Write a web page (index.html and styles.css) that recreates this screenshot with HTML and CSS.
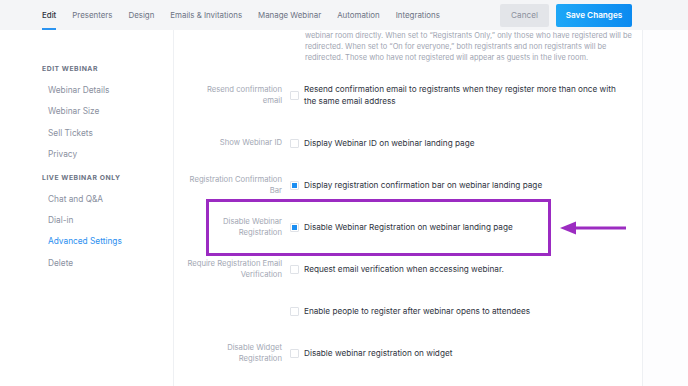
FILE: index.html
```html
<!DOCTYPE html>
<html lang="en">
<head>
    <meta charset="UTF-8">
    <meta name="viewport" content="width=device-width, initial-scale=1.0">
    <title>Advanced Settings</title>
    <link rel="stylesheet" href="styles.css">
</head>
<body>

    <div class="topbar">
        <nav class="tabs">
            <a class="tab active">Edit</a>
            <a class="tab">Presenters</a>
            <a class="tab">Design</a>
            <a class="tab">Emails &amp; Invitations</a>
            <a class="tab">Manage Webinar</a>
            <a class="tab">Automation</a>
            <a class="tab">Integrations</a>
        </nav>
        <div class="actions">
            <button class="btn-cancel">Cancel</button>
            <button class="btn-save">Save Changes</button>
        </div>
    </div>

    <div class="page">
        <aside class="sidebar">
            <h4>Edit Webinar</h4>
            <a>Webinar Details</a>
            <a>Webinar Size</a>
            <a>Sell Tickets</a>
            <a class="last">Privacy</a>
            <h4>Live Webinar Only</h4>
            <a>Chat and Q&amp;A</a>
            <a>Dial-in</a>
            <a class="current">Advanced Settings</a>
            <a>Delete</a>
        </aside>

        <main class="card">
            <p class="note">webinar room directly. When set to “Registrants Only,” only those who have registered will be redirected. When set to “On for everyone,” both registrants and non registrants will be redirected. Those who have not registered will appear as guests in the live room.</p>

            <div class="row first">
                <label class="name">Resend confirmation email</label>
                <span class="check"></span>
                <span class="text">Resend confirmation email to registrants when they register more than once with the same email address</span>
            </div>

            <div class="row">
                <label class="name">Show Webinar ID</label>
                <span class="check"></span>
                <span class="text">Display Webinar ID on webinar landing page</span>
            </div>

            <div class="row">
                <label class="name">Registration Confirmation Bar</label>
                <span class="check on"></span>
                <span class="text">Display registration confirmation bar on webinar landing page</span>
            </div>

            <div class="row">
                <label class="name">Disable Webinar Registration</label>
                <span class="check on"></span>
                <span class="text">Disable Webinar Registration on webinar landing page</span>
                <div class="highlight"></div>
                <svg class="arrow" width="70" height="16" viewBox="0 0 70 16">
                    <line x1="14" y1="8" x2="67" y2="8" stroke="#9c2cc1" stroke-width="3"/>
                    <polygon points="1,8 17,1.5 17,14.5" fill="#9c2cc1"/>
                </svg>
            </div>

            <div class="row">
                <label class="name">Require Registration Email Verification</label>
                <span class="check"></span>
                <span class="text">Request email verification when accessing webinar.</span>
            </div>

            <div class="row">
                <label class="name"></label>
                <span class="check"></span>
                <span class="text">Enable people to register after webinar opens to attendees</span>
            </div>

            <div class="row">
                <label class="name">Disable Widget Registration</label>
                <span class="check"></span>
                <span class="text">Disable webinar registration on widget</span>
            </div>
        </main>
    </div>

</body>
</html>
```

FILE: styles.css
```css
body {
    margin: 0;
    font-family: Inter, "Noto Sans", sans-serif;
    background: #fdfdfe;
    overflow: hidden;
}

.topbar {
    position: relative;
    z-index: 2;
    height: 30px;
    display: flex;
    align-items: center;
    justify-content: space-between;
    background: #f4f5f7;
    padding: 0 56px 0 42px;
}

.tabs {
    display: flex;
    gap: 16px;
    height: 100%;
}

.tab {
    display: flex;
    align-items: center;
    font-size: 7.9px;
    color: #6c7384;
    border-bottom: 2px solid transparent;
    padding-top: 2px;
}

.tab.active {
    color: #2d3340;
    font-weight: 500;
    border-bottom-color: #2b94f1;
}

.actions {
    display: flex;
    gap: 7px;
}

.btn-cancel, .btn-save {
    height: 23px;
    border: none;
    border-radius: 2px;
    font-family: inherit;
    font-size: 8.2px;
}

.btn-cancel {
    width: 49px;
    background: #e3e5e9;
    color: #8b909c;
}

.btn-save {
    width: 76px;
    background: linear-gradient(90deg, #1ea7f7, #0b8af0);
    color: #fff;
    font-weight: 600;
}

.page {
    display: flex;
    height: 356px;
}

.sidebar {
    width: 174px;
    flex-shrink: 0;
    background: #fff;
    border-right: 1px solid #eef0f3;
    padding: 34px 0 0 42px;
    box-sizing: border-box;
}

.sidebar h4 {
    margin: 0 0 12px;
    font-size: 6.8px;
    line-height: 9px;
    font-weight: 700;
    letter-spacing: 0.55px;
    text-transform: uppercase;
    color: #6c7384;
}

.sidebar a {
    display: block;
    margin: 0 0 10.3px 6px;
    font-size: 8.3px;
    line-height: 11px;
    color: #8a90a0;
}

.sidebar a.last {
    margin-bottom: 13px;
}

.sidebar a.current {
    color: #2b8ff0;
}

.card {
    width: 469px;
    flex-shrink: 0;
    background: #fff;
    border-right: 1px solid #eef0f3;
    box-sizing: border-box;
}

.note {
    margin: 0 0 21px 131px;
    width: 330px;
    font-size: 7.45px;
    line-height: 11px;
    color: #a0a5b2;
}

.row {
    position: relative;
    display: grid;
    grid-template-columns: 96px 22px 1fr;
    align-items: center;
    min-height: 23px;
    margin-bottom: 19px;
    padding: 0 18px 0 12px;
}

.row.first {
    margin-bottom: 25px;
}

.name {
    text-align: right;
    font-size: 7.7px;
    line-height: 10.5px;
    color: #a3a8b4;
}

.check {
    justify-self: center;
    width: 7px;
    height: 7px;
    border: 1px solid #dfe2e7;
    border-radius: 1px;
    margin-left: 2px;
    position: relative;
}

.check.on::after {
    content: "";
    position: absolute;
    left: 1px;
    top: 1px;
    width: 5px;
    height: 5px;
    background: #1b8ef2;
}

.text {
    font-size: 8.2px;
    line-height: 11.5px;
    color: #2f3441;
}

.highlight {
    position: absolute;
    left: 32px;
    top: -17px;
    width: 339px;
    height: 51px;
    border: 3px solid #9b2bc2;
}

.arrow {
    position: absolute;
    left: 385px;
    top: 4px;
}
```
